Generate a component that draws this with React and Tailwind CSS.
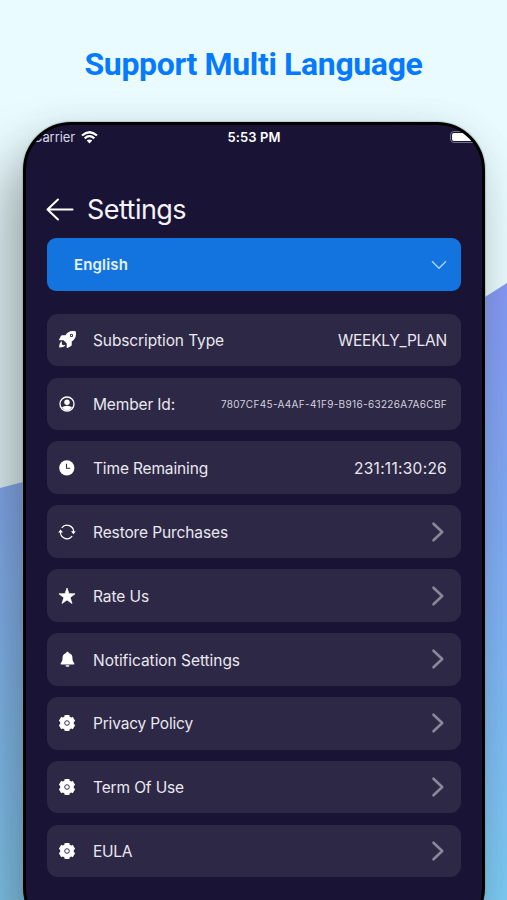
import React from "react";

const Rocket = () => (
  <svg className="size-[17px]" viewBox="0 0 512 512" fill="#fff">
    <path d="M505 19c-1-6-6-10-11-11-32-7-57-7-83-7C305 1 242 58 194 128H95c-17 0-30 8-37 21L3 256c-6 12 0 24 14 24h118l97 97v118c0 14 14 19 24 14l107-55c12-7 21-20 21-37v-99c70-48 128-111 128-217 0-26 0-50-7-82zM376 180a48 48 0 1 1 0-96 48 48 0 0 1 0 96z" />
    <circle cx="376" cy="132" r="20" />
    <path d="M90 310c-60 22-82 92-86 190 120-4 168-36 190-86-50 22-80 10-92-2-14-14-24-50-12-102z" />
  </svg>
);

const Person = () => (
  <svg className="size-4" viewBox="0 0 16 16" fill="none">
    <circle cx="8" cy="8" r="7" stroke="#fff" strokeWidth="1.3" />
    <circle cx="8" cy="6.3" r="2.7" fill="#fff" />
    <path d="M2.9 11.6C4.200 10.500 6 9.800 8 9.800s3.800.7 5.100 1.800A6.200 6.200 0 0 1 8 14.300a6.200 6.200 0 0 1-5.100-2.700Z" fill="#fff" />
  </svg>
);

const Clock = () => (
  <svg className="size-4" viewBox="0 0 16 16" fill="none">
    <circle cx="7.800" cy="7.800" r="7.600" fill="#fff" />
    <path d="M7.500 3.800V8.300H11.200" stroke="#2d2845" strokeWidth="1.100" />
  </svg>
);

const Refresh = () => (
  <svg className="size-[18px]" viewBox="0 0 18 18" fill="none">
    <path d="M3.800 4.800A6.600 6.600 0 0 1 15.600 9M14.200 13.200A6.600 6.600 0 0 1 2.400 9" stroke="#fff" strokeWidth="1.200" />
    <path d="M13 8.200h4.800l-2.400 3zM.2 9.600h4.800L2.600 6.600z" fill="#fff" />
  </svg>
);

const Star = () => (
  <svg className="size-[18px]" viewBox="0 0 18 18" fill="#fff" stroke="#fff" strokeWidth=".7" strokeLinejoin="round">
    <path d="M9 1l2 5.700 6.100.1-4.900 3.800 1.800 5.900L9 13l-5 3.500 1.800-5.900L.9 6.800 7 6.700z" />
  </svg>
);

const Bell = () => (
  <svg className="size-[17px]" viewBox="0 0 18 18" fill="#fff">
    <path d="M9 .8c-.8 0-1.400.5-1.400 1.200C5 2.600 3.800 4.600 3.800 7c0 3.400-.8 4.700-1.800 5.700-.6.800-.2 1.600.6 1.600h12.800c.8 0 1.200-.8.600-1.600-1-1-1.800-2.300-1.800-5.700 0-2.400-1.200-4.400-3.800-5C10.400 1.300 9.800.8 9 .8zM6.800 15h4.400c-.2 1.200-1 1.800-2.200 1.800s-2-.6-2.200-1.800z" />
  </svg>
);

const Gear = () => (
  <svg className="size-[18px]" viewBox="0 0 18 18" fill="none">
    <circle cx="9" cy="9" r="6.900" fill="#fff" />
    <path d="M9 .9v16.200M2 4.950l14 8.100M2 13.050l14-8.100" stroke="#fff" strokeWidth="4.800" />
    <circle cx="9" cy="9" r="2.300" stroke="#37324d" strokeWidth="1" />
  </svg>
);

const Chevron = () => (
  <svg className="h-[22px] w-[14px]" viewBox="0 0 14 22" fill="none">
    <path d="M2.500 2.700L11.200 11L2.500 19.300" stroke="#8a879b" strokeWidth="2.600" strokeLinecap="round" strokeLinejoin="round" />
  </svg>
);

const rows = [
  { icon: Rocket, label: "Subscription Type", width: 131, value: "WEEKLY_PLAN", valueWidth: 109 },
  { icon: Person, label: "Member Id:", width: 82, value: "7807CF45-A4AF-41F9-B916-63226A7A6CBF", valueWidth: 226, small: true },
  { icon: Clock, label: "Time Remaining", width: 115, value: "231:11:30:26", valueWidth: 93 },
  { icon: Refresh, label: "Restore Purchases", width: 135 },
  { icon: Star, label: "Rate Us", width: 56 },
  { icon: Bell, label: "Notification Settings", width: 147 },
  { icon: Gear, label: "Privacy Policy", width: 100 },
  { icon: Gear, label: "Term Of Use", width: 91 },
  { icon: Gear, label: "EULA", width: 39 },
];

// Spreads letter spacing so that a single line fills the given width.
function FitText({ children, width, className = "" }) {
  const ref = React.useRef(null);
  React.useLayoutEffect(() => {
    const fit = () => {
      const el = ref.current;
      if (!el) return;
      el.style.letterSpacing = "0px";
      const natural = el.getBoundingClientRect().width;
      el.style.letterSpacing = (width - natural) / children.length + "px";
    };
    fit();
    document.fonts?.ready.then(fit);
  }, [width, children]);
  return <span ref={ref} className={"inline-block whitespace-nowrap " + className}>{children}</span>;
}

export default function App() {
  return (
    <div className="relative isolate flex h-[900px] w-[507px] flex-col items-center overflow-hidden bg-[#eafbff] font-['Inter',sans-serif]">
      <svg className="absolute inset-0 -z-10" width="507" height="900" viewBox="0 0 507 900">
        <defs>
          <linearGradient id="wave" x1="0" y1="0" x2="0" y2="1">
            <stop offset="0" stopColor="#8598f5" />
            <stop offset="0.5" stopColor="#80b0f7" />
            <stop offset="1" stopColor="#7ccbf5" />
          </linearGradient>
          <linearGradient id="waveLeft" x1="0" y1="0" x2="0" y2="1">
            <stop offset="0" stopColor="#86a6f8" />
            <stop offset="1" stopColor="#84ccf8" />
          </linearGradient>
        </defs>
        <path d="M240 430L485 297L507 283V900H240Z" fill="url(#wave)" />
        <path d="M0 488L23 482L240 425V900H0Z" fill="url(#waveLeft)" />
      </svg>
      <h1 className="mt-[43px] h-[42px] shrink-0 text-[32px] leading-[42px] font-bold text-[#067aff] font-['Roboto',sans-serif]">
        <FitText width={338}>Support Multi Language</FitText>
      </h1>
      <main className="mt-[37px] ml-[1px] flex h-[814px] w-[462px] shrink-0 flex-col overflow-hidden rounded-[48px] border-[3px] border-black bg-[#191435] px-[21px] shadow-[0_0_1px_1px_rgba(120,150,150,0.4),0_8px_36px_rgba(60,80,60,0.12),-20px_34px_56px_rgba(45,55,50,0.38)]">
        <header className="-mx-[14px] mt-px grid h-6 shrink-0 grid-cols-[1fr_auto_1fr] items-center text-[13px] text-white">
          <div className="flex items-center gap-[6px]">
            <FitText width={42} className="text-[#d8d6e4]">Carrier</FitText>
            <svg className="-mt-[2px] h-[13px] w-[17px]" viewBox="0 0 17 13" fill="none" stroke="#fff" strokeWidth="2.300">
              <path d="M1 4.500Q8.500 -2 16 4.500M3.700 7.300Q8.500 3 13.300 7.300" />
              <path d="M8.500 12.400L5.700 9.500Q8.500 7.300 11.300 9.500Z" fill="#fff" stroke="none" />
            </svg>
          </div>
          <FitText width={53} className="font-semibold">5:53 PM</FitText>
          <div className="-mr-1 -mt-[2px] ml-auto h-[12px] w-[29px] rounded-[4px] border border-[#777387] p-px">
            <div className="h-full rounded-[2px] bg-white" />
          </div>
        </header>
        <div className="mt-[40px] flex h-10 shrink-0 items-center gap-[13px]">
          <svg className="-ml-px h-6 w-7" viewBox="0 0 28 24" fill="none" stroke="#fff" strokeWidth="2" strokeLinecap="round" strokeLinejoin="round">
            <path d="M12 1.500L1.500 11.500L12 21.500M1.500 11.500H26.500" />
          </svg>
          <FitText width={99} className="text-[27px] leading-10 text-[#f4f3f8]">Settings</FitText>
        </div>
        <button className="mt-[8px] flex h-[53px] shrink-0 items-center justify-between rounded-[9px] bg-[#1474df] pt-px pr-[14px] pl-[27px] text-[15px] font-semibold text-[#e4f2ff]">
          <FitText width={54}>English</FitText>
          <svg className="h-[10px] w-4" viewBox="0 0 16 10" fill="none" stroke="#aad2fa" strokeWidth="1.400">
            <path d="M1 1.300L8 8.300L15 1.300" />
          </svg>
        </button>
        <ul className="mt-[22.700px] flex flex-col gap-[11.400px]">
          {rows.map(({ icon: Icon, label, width, value, valueWidth, small }) => (
            <li key={label} className="flex h-[52.500px] shrink-0 items-center rounded-[11px] bg-[#2d2845] pr-[14px] pl-[11px] text-[15.500px] text-[#e9e7f0]">
              <span className="mr-[17px] flex w-[18px] justify-center"><Icon /></span>
              <FitText width={width} className="pt-[1.500px]">{label}</FitText>
              <span className="ml-auto flex items-center">
                {value ? (
                  <FitText width={valueWidth} className={small ? "pt-[1.500px] text-[10px] text-[#d4d1df]" : "pt-[1.500px]"}>{value}</FitText>
                ) : (
                  <span className="mr-[2px] flex"><Chevron /></span>
                )}
              </span>
            </li>
          ))}
        </ul>
      </main>
    </div>
  );
}
